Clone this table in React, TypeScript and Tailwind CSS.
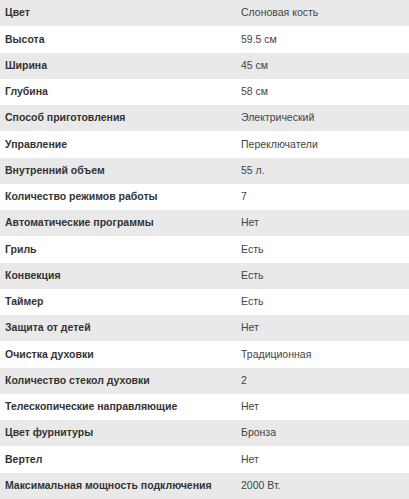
import React from 'react';

const specs: [string, string][] = [
  ['Цвет', 'Слоновая кость'],
  ['Высота', '59.5 см'],
  ['Ширина', '45 см'],
  ['Глубина', '58 см'],
  ['Способ приготовления', 'Электрический'],
  ['Управление', 'Переключатели'],
  ['Внутренний объем', '55 л.'],
  ['Количество режимов работы', '7'],
  ['Автоматические программы', 'Нет'],
  ['Гриль', 'Есть'],
  ['Конвекция', 'Есть'],
  ['Таймер', 'Есть'],
  ['Защита от детей', 'Нет'],
  ['Очистка духовки', 'Традиционная'],
  ['Количество стекол духовки', '2'],
  ['Телескопические направляющие', 'Нет'],
  ['Цвет фурнитуры', 'Бронза'],
  ['Вертел', 'Нет'],
  ['Максимальная мощность подключения', '2000 Вт.'],
];

const App: React.FC = () => {
  return (
    <div className="w-[409px] h-[499px] overflow-hidden bg-white [font-family:'Liberation_Sans',Arial,sans-serif] text-[10.5px]">
      {specs.map(([label, value], i) => (
        <div
          key={label}
          className={`flex items-center h-[26.26px] ${i % 2 === 0 ? 'bg-[#e9e9e9]' : 'bg-white'}`}
        >
          <div className="w-[241px] shrink-0 pl-[5px] font-bold text-[#333333] whitespace-nowrap">{label}</div>
          <div className="flex-1 text-[#444444] whitespace-nowrap">{value}</div>
        </div>
      ))}
    </div>
  );
};

export default App;
